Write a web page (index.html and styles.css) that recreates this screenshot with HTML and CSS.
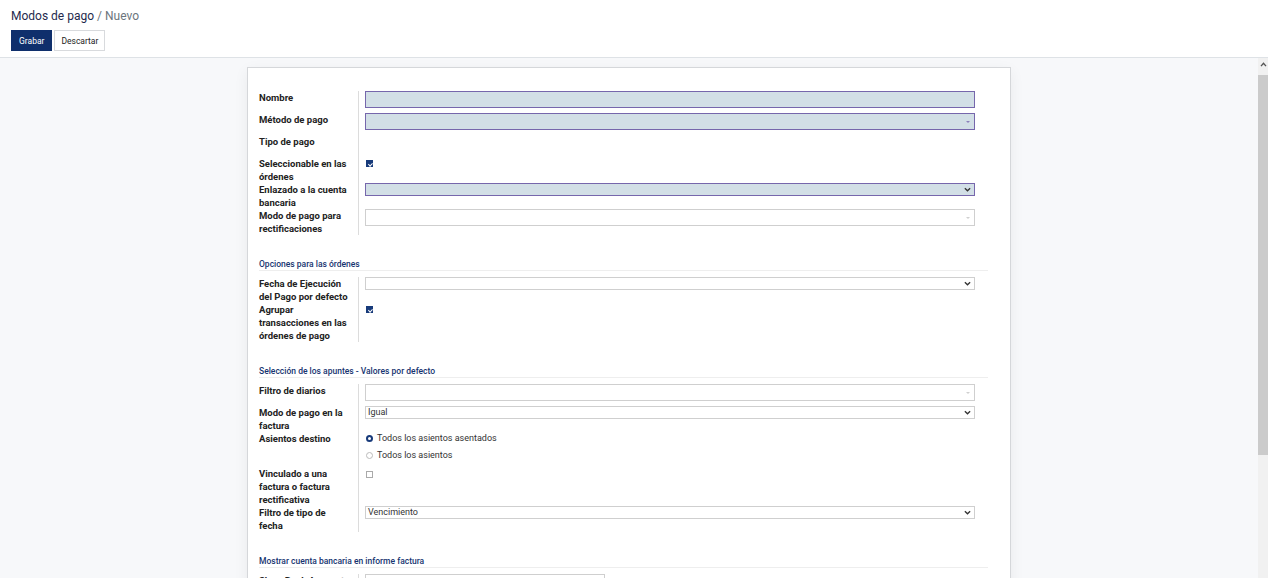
FILE: index.html
```html
<!DOCTYPE html>
<html lang="es">
<head>
    <meta charset="UTF-8">
    <meta name="viewport" content="width=device-width, initial-scale=1.0">
    <title>Modos de pago / Nuevo</title>
    <link rel="stylesheet" href="styles.css">
</head>
<body>
    <div class="header">
        <div class="breadcrumb">
            <span class="bc-main">Modos de pago</span><span class="bc-current"> / Nuevo</span>
        </div>
        <div class="buttons">
            <button class="btn btn-primary">Grabar</button>
            <button class="btn btn-secondary">Descartar</button>
        </div>
    </div>

    <div class="main">
        <div class="content">
            <div class="sheet">

                <div class="group">
                    <div class="row">
                        <div class="label">Nombre</div>
                        <div class="field"><div class="input required"></div></div>
                    </div>
                    <div class="row">
                        <div class="label">Método de pago</div>
                        <div class="field"><div class="input required"><span class="caret caret-purple"></span></div></div>
                    </div>
                    <div class="row">
                        <div class="label">Tipo de pago</div>
                        <div class="field"></div>
                    </div>
                    <div class="row">
                        <div class="label">Seleccionable en las órdenes</div>
                        <div class="field"><span class="check checked"></span></div>
                    </div>
                    <div class="row">
                        <div class="label">Enlazado a la cuenta bancaria</div>
                        <div class="field"><div class="select required"><svg class="chevron" viewBox="0 0 8 5"><path d="M1 1 L4 4 L7 1" /></svg></div></div>
                    </div>
                    <div class="row">
                        <div class="label">Modo de pago para rectificaciones</div>
                        <div class="field"><div class="input"><span class="caret"></span></div></div>
                    </div>
                </div>

                <div class="section-title">Opciones para las órdenes</div>
                <div class="group">
                    <div class="row">
                        <div class="label">Fecha de Ejecución del Pago por defecto</div>
                        <div class="field"><div class="select"><svg class="chevron" viewBox="0 0 8 5"><path d="M1 1 L4 4 L7 1" /></svg></div></div>
                    </div>
                    <div class="row">
                        <div class="label">Agrupar transacciones en las órdenes de pago</div>
                        <div class="field"><span class="check checked"></span></div>
                    </div>
                </div>

                <div class="section-title">Selección de los apuntes - Valores por defecto</div>
                <div class="group">
                    <div class="row">
                        <div class="label">Filtro de diarios</div>
                        <div class="field"><div class="input"><span class="caret"></span></div></div>
                    </div>
                    <div class="row">
                        <div class="label">Modo de pago en la factura</div>
                        <div class="field"><div class="select">Igual<svg class="chevron" viewBox="0 0 8 5"><path d="M1 1 L4 4 L7 1" /></svg></div></div>
                    </div>
                    <div class="row">
                        <div class="label">Asientos destino</div>
                        <div class="field radios">
                            <div class="radio"><span class="dot checked"></span>Todos los asientos asentados</div>
                            <div class="radio"><span class="dot"></span>Todos los asientos</div>
                        </div>
                    </div>
                    <div class="row">
                        <div class="label">Vinculado a una factura o factura rectificativa</div>
                        <div class="field"><span class="check"></span></div>
                    </div>
                    <div class="row">
                        <div class="label">Filtro de tipo de fecha</div>
                        <div class="field"><div class="select">Vencimiento<svg class="chevron" viewBox="0 0 8 5"><path d="M1 1 L4 4 L7 1" /></svg></div></div>
                    </div>
                </div>

                <div class="section-title">Mostrar cuenta bancaria en informe factura</div>
                <div class="group">
                    <div class="row">
                        <div class="label">Show Bank Account</div>
                        <div class="field"><div class="input short">Completo</div></div>
                    </div>
                </div>

            </div>
        </div>

        <div class="scrollbar">
            <div class="sb-arrow"><svg viewBox="0 0 8 6"><path d="M1 5 L4 1.5 L7 5" /></svg></div>
            <div class="sb-thumb"></div>
            <div class="sb-track"></div>
        </div>
    </div>
</body>
</html>
```

FILE: styles.css
```css
html, body {
    height: 100%;
}
body {
    margin: 0;
    font-family: Roboto, "Liberation Sans", sans-serif;
    color: #222;
    background: #fff;
    overflow: hidden;
}
.header {
    height: 58px;
    box-sizing: border-box;
    padding: 8px 11px 0;
    border-bottom: 1px solid #dee2e6;
    background: #fff;
}
.breadcrumb {
    font-size: 12px;
    line-height: 16px;
}
.bc-main {
    color: #1f2a4d;
}
.bc-current {
    color: #6c757d;
}
.buttons {
    display: flex;
    gap: 2px;
    margin-top: 6px;
}
.btn {
    font-family: inherit;
    font-size: 8.5px;
    height: 21px;
    padding: 0 7px;
    border-radius: 0;
    cursor: pointer;
}
.btn-primary {
    background: #0f2f6c;
    color: white;
    border: 1px solid #0f2f6c;
}
.btn-secondary {
    background: white;
    color: #222;
    border: 1px solid #d8dadd;
    padding: 0 6px;
}
.main {
    display: flex;
    height: calc(100% - 58px);
}
.content {
    flex: 1;
    background: #f7f8fa;
    padding-top: 9px;
    overflow: hidden;
}
.sheet {
    width: 764px;
    box-sizing: border-box;
    margin: 0 auto;
    background: white;
    border: 1px solid #d5d7da;
    box-shadow: 0 4px 14px rgba(0,0,0,0.06);
    padding: 23px 22px 40px 11px;
    min-height: 600px;
}
.group {
    margin-right: 13px;
}
.row {
    display: flex;
}
.label {
    width: 100px;
    box-sizing: border-box;
    padding-right: 9px;
    flex-shrink: 0;
    border-right: 1px solid #dcdcdc;
    font-size: 9.5px;
    font-weight: bold;
    line-height: 13px;
    color: #222;
}
.field {
    flex: 1;
    padding-left: 6px;
    min-height: 22px;
    font-size: 9px;
    color: #333;
}
.input, .select {
    position: relative;
    box-sizing: border-box;
    border: 1px solid #cfcfcf;
    background: white;
    padding: 0 2px;
}
.input {
    height: 17px;
    line-height: 15px;
}
.select {
    height: 13px;
    line-height: 11px;
}
.input.required, .select.required {
    background: #d2dfe6;
    border-color: #7667ac;
}
.input.short {
    width: 240px;
}
.caret {
    position: absolute;
    right: 4px;
    top: 7px;
    border-left: 2px solid transparent;
    border-right: 2px solid transparent;
    border-top: 2px solid #d0d0d0;
}
.caret-purple {
    border-top-color: #8c80bb;
}
.chevron {
    position: absolute;
    right: 3px;
    top: 3px;
    width: 7px;
    height: 5px;
    fill: none;
    stroke: #333;
    stroke-width: 1.5;
}
.check {
    display: block;
    width: 7px;
    height: 7px;
    margin: 3px 0 0 1px;
    box-sizing: border-box;
    border: 1px solid #aaa;
    background: white;
    position: relative;
}
.check.checked {
    background: #173a7a;
    border-color: #173a7a;
}
.check.checked::after {
    content: "";
    position: absolute;
    left: 1.5px;
    top: 0.5px;
    width: 1.5px;
    height: 3px;
    border: solid white;
    border-width: 0 1px 1px 0;
    transform: rotate(45deg);
}
.row:nth-child(4) .check:not(.checked) {
    margin-top: 4px;
}
.radios {
    padding-bottom: 1px;
}
.radio {
    display: flex;
    align-items: center;
    height: 17px;
    line-height: 13px;
    margin-top: -2px;
    margin-bottom: 2px;
}
.dot {
    width: 7px;
    height: 7px;
    box-sizing: border-box;
    border-radius: 50%;
    border: 1px solid #bbb;
    margin: 0 4px 0 1px;
}
.dot.checked {
    border: 2.5px solid #173a7a;
    background: white;
}
.section-title {
    margin-top: 23px;
    margin-bottom: 6px;
    font-size: 8.5px;
    font-weight: 500;
    line-height: 12px;
    color: #163470;
    border-bottom: 1px solid #eeeeee;
}
.scrollbar {
    width: 10px;
    display: flex;
    flex-direction: column;
    background: #f1f1f1;
}
.sb-arrow {
    height: 17px;
    display: flex;
    justify-content: center;
    padding-top: 4px;
    box-sizing: border-box;
}
.sb-arrow svg {
    width: 7px;
    height: 5px;
    fill: none;
    stroke: #555;
    stroke-width: 1.6;
}
.sb-thumb {
    height: 380px;
    background: #cbcbcb;
}
.sb-track {
    flex: 1;
}
```
